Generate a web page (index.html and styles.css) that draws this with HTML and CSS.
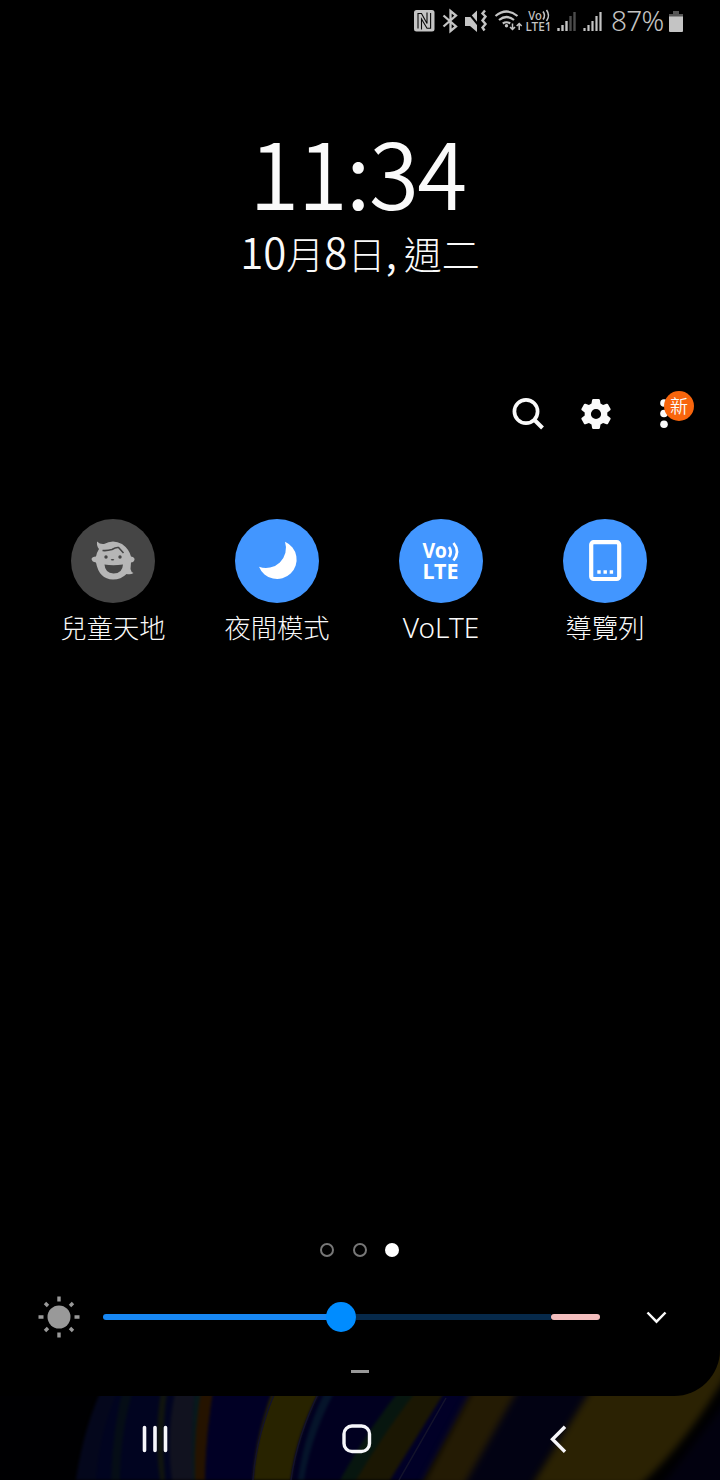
FILE: index.html
```html
<!DOCTYPE html>
<html lang="zh-Hant">
<head>
    <meta charset="UTF-8">
    <meta name="viewport" content="width=device-width, initial-scale=1.0">
    <title>快速設定</title>
    <link rel="stylesheet" href="styles.css">
</head>
<body>
    <div class="phone">
        <svg class="wallpaper" viewBox="0 0 720 140" preserveAspectRatio="none">
            <rect width="720" height="140" fill="#000002"/>
            <g class="soft">
                <path d="M106 40 Q84 85 76 140H335V40Z" fill="#010420"/>
                <path d="M106 40 Q84 85 76 140H96Q100 85 123 40Z" fill="#04071c"/>
                <path d="M125 40Q112 90 111 140H120Q120 90 136 40Z" fill="#050d16"/>
                <path d="M163 40Q153 90 160 140H165Q160 90 169 40Z" fill="#10140f"/>
                <path d="M178 40Q165 90 172 140H194Q190 90 196 40Z" fill="#11121f"/>
                <path d="M196 40Q190 90 193 140H203V40Z" fill="#07191c"/>
                <path d="M203 40Q193 90 195 140H205Q206 90 215 40Z" fill="#251300"/>
                <path d="M215 40Q206 90 205 140H256Q258 90 275 40Z" fill="#010025"/>
                <path d="M277 40Q256 90 253 140H291Q297 90 326 40Z" fill="#282300"/>
                <path d="M326 40Q297 90 291 140H350L415 40Z" fill="#010020"/>
                <path d="M331 40Q304 90 298 140H304Q312 90 341 40Z" fill="#05142a"/>
                <path d="M408 40Q370 85 340 140H366Q396 80 425 40Z" fill="#07160f"/>
                <path d="M425 40Q388 86 356 140H396L454 40Z" fill="#1b1703"/>
                <path d="M452 40L390 140H424L480 40Z" fill="#010027"/>
            </g>
            <g class="softer">
                <path d="M480 35L422 145H468L526 35Z" fill="#241b04"/>
                <path d="M526 35L464 145H530L600 35Z" fill="#020213"/>
                <path d="M600 35L532 145H640Q690 100 735 20V0H700Z" fill="#2b2203"/>
                <path d="M735 50L658 150H735Z" fill="#02010f"/>
            </g>
            <path d="M276 50Q256 96 253 140M320 50Q297 96 291 140M446 58L399 140" class="crease"/>
        </svg>

        <main class="panel">
            <header class="status">
                <svg width="144" height="30" viewBox="0 0 144 30">
                    <rect x="1" y="2" width="20.500" height="21.500" rx="2.500" fill="#c4c4c4"/>
                    <path d="M5 20.500V5.500H8.500L14 15.500V4.500M8.500 21.500V11L14 20.200H17.600V5" fill="none" stroke="#0a0a0a" stroke-width="1.100"/>
                    <path d="M30.500 7.500L43 18.500L37.500 23V3L43 7.500L30.500 18.500" fill="none" stroke="#c4c4c4" stroke-width="2.300"/>
                    <path d="M52 9h5l7-6.500V24l-7-6h-5z" fill="#c4c4c4"/>
                    <path d="M53 2L67 19" stroke="#000" stroke-width="2"/>
                    <path d="M72 2.500l-2.500 3 3 3-3 4 3 3.500-3 3.500 2 3" stroke="#c4c4c4" stroke-width="2.400" fill="none"/>
                    <path d="M82.500 8Q93.500-1 104.500 8M86 12Q93.500 6 101 12M89.800 15.500Q93.500 13 97.200 15.500" fill="none" stroke="#c4c4c4" stroke-width="2.200"/>
                    <circle cx="93.500" cy="17.800" r="1.700" fill="#c4c4c4"/>
                    <path d="M99.500 15.500V21M97 19l2.500 2.500L102 19M106.200 22V16M103.700 18l2.500-2.500 2.500 2.500" fill="none" stroke="#c4c4c4" stroke-width="1.500"/>
                    <text x="115.300" y="11.500" font-size="12.500" textLength="13.500" lengthAdjust="spacingAndGlyphs" class="volte-text">Vo</text>
                    <path d="M130 3.500q3 4 0 8M133.500 2q4 5.500 0 11" stroke="#c4c4c4" stroke-width="1.600" fill="none"/>
                    <text x="112.500" y="23" font-size="12.500" textLength="26" lengthAdjust="spacingAndGlyphs" class="volte-text">LTE1</text>
                </svg>
                <svg class="signal" width="20" height="22" viewBox="0 0 20 22">
                    <path d="M1.500 18V21M5.500 15V21M9.500 11V21" stroke="#c4c4c4" stroke-width="2.400"/>
                    <path d="M13.500 6V21M17.500 2V21" stroke="#4c4c4c" stroke-width="2.400"/>
                </svg>
                <svg class="signal second" width="20" height="22" viewBox="0 0 20 22">
                    <path d="M1.500 18V21M5.500 15V21M9.500 11V21M13.500 6V21M17.500 2V21" stroke="#c4c4c4" stroke-width="2.200"/>
                </svg>
                <span class="percent">87%</span>
                <svg class="battery" width="16" height="23" viewBox="0 0 16 23">
                    <path d="M5 0h6v3h4v3H1V3h4z" fill="#555"/>
                    <path d="M1 5.500h14V20q0 1-1 1H2q-1 0-1-1z" fill="#c4c4c4"/>
                </svg>
            </header>

            <div class="clock">11:34</div>
            <div class="date"><span class="num">10</span>月<span class="num">8</span>日<span class="num comma">,</span>週二</div>

            <div class="toolbar">
                <svg width="34" height="34" viewBox="0 0 34 34" fill="none" stroke="#fafafa">
                    <circle cx="15" cy="14.500" r="11.600" stroke-width="3.700"/>
                    <path d="M23 22.500L31.500 31" stroke-width="4"/>
                </svg>
                <svg width="30" height="32" viewBox="0 0 30 32">
                    <path fill="#fafafa" fill-rule="evenodd" d="M12.300 1h5.400q1 0 1.200 1l.6 3.600 2.600 1.500 3.400-1.300q1-.4 1.500.5l2.500 4.400q.5.900-.3 1.500l-2.900 2.300v3l2.900 2.300q.8.600.3 1.500L27 25.700q-.5.900-1.500.5l-3.400-1.300-2.600 1.500-.6 3.600q-.2 1-1.200 1h-5.400q-1 0-1.200-1l-.6-3.600-2.600-1.500-3.400 1.300q-1 .4-1.500-.5L.5 21.300q-.5-.9.3-1.500l2.900-2.300v-3L.800 12.200q-.8-.6-.3-1.500L3 6.300q.5-.9 1.500-.5l3.400 1.300 2.600-1.500.6-3.600q.2-1 1.200-1zM15 10.900a5.100 5.100 0 1 0 0 10.200 5.100 5.100 0 1 0 0-10.200z"/>
                </svg>
                <div class="more">
                    <svg width="8" height="30" viewBox="0 0 8 30" fill="#fafafa">
                        <circle cx="4" cy="4" r="3.800"/>
                        <circle cx="4" cy="14.500" r="3.800"/>
                        <circle cx="4" cy="25.200" r="3.800"/>
                    </svg>
                    <span class="badge">新</span>
                </div>
            </div>

            <section class="tiles">
                <div class="tile">
                    <div class="circle off">
                        <svg width="84" height="84" viewBox="0 0 84 84">
                            <path fill="#b6b6b6" d="M26 22.500Q29 25.500 33 25Q42 20 51 25Q58 30 60 37.500Q64 38 63.500 41Q62.500 43.500 60 43.500L59.500 50Q60 53 62.500 54Q60 56 55.500 55Q50 60.500 42 60.500Q28 60 25 43.500Q21 43 20.500 40Q21 37.500 25 37.500Q25.500 34 28 30Q25.500 27 26 22.500z"/>
                            <path d="M31.500 31.500Q36 32 41 30.500Q45 28 47.500 28.500L52.500 34" fill="none" stroke="#454545" stroke-width="1.500"/>
                            <circle cx="35" cy="38" r="1.700" fill="#454545"/>
                            <circle cx="49" cy="38" r="1.700" fill="#454545"/>
                            <ellipse cx="41.500" cy="40.800" rx="1.800" ry=".8" fill="#454545"/>
                            <path d="M33.500 45.500Q42 47 52 45.500Q51.500 54.500 42.500 54.500Q34 54 33.500 45.500z" fill="#454545"/>
                        </svg>
                    </div>
                    <span class="label">兒童天地</span>
                </div>
                <div class="tile">
                    <div class="circle">
                        <svg width="84" height="84" viewBox="0 0 84 84">
                            <path d="M50 22.700A19.500 19.500 0 1 1 24 47.700A20 20 0 0 0 50 22.700z" fill="#fff"/>
                        </svg>
                    </div>
                    <span class="label">夜間模式</span>
                </div>
                <div class="tile">
                    <div class="circle">
                        <svg width="84" height="84" viewBox="0 0 84 84">
                            <text x="23.500" y="38.500" textLength="24.500" lengthAdjust="spacingAndGlyphs" class="lte">Vo</text>
                            <path d="M50 28q3.500 5 0 10M54.500 24q7 8.500 0 17.500" fill="none" stroke="#fff" stroke-width="2.700"/>
                            <text x="23.500" y="59.500" textLength="36" lengthAdjust="spacingAndGlyphs" class="lte">LTE</text>
                        </svg>
                    </div>
                    <span class="label latin">VoLTE</span>
                </div>
                <div class="tile">
                    <div class="circle">
                        <svg width="84" height="84" viewBox="0 0 84 84">
                            <rect x="28.200" y="23.200" width="28" height="36.800" rx="2.500" fill="none" stroke="#fff" stroke-width="4.200"/>
                            <path d="M34.300 53h3.400M40.500 53h3.400M46.700 53h3.400" stroke="#fff" stroke-width="3.400"/>
                        </svg>
                    </div>
                    <span class="label">導覽列</span>
                </div>
            </section>

            <div class="pages">
                <i class="page"></i>
                <i class="page"></i>
                <i class="page current"></i>
            </div>

            <div class="brightness">
                <svg width="42" height="42" viewBox="-21 -21 42 42">
                    <circle r="11.500" fill="#999"/>
                    <g stroke="#999" stroke-width="3.400">
                        <path d="M0-20.500V-15.500M0 20.500V15.500M-20.500 0H-15.500M20.500 0H15.500"/>
                        <path d="M-14-14L-11-11M14-14L11-11M-14 14L-11 11M14 14L11 11"/>
                    </g>
                </svg>
                <div class="slider">
                    <div class="fill"></div>
                    <div class="knob"></div>
                    <div class="rest"></div>
                    <div class="limit"></div>
                </div>
                <svg width="22" height="14" viewBox="0 0 22 14">
                    <path d="M1.500 2.500l9 9.200 9-9.200" fill="none" stroke="#fafafa" stroke-width="2.500"/>
                </svg>
            </div>
            <div class="handle"></div>
        </main>

        <nav class="nav">
            <svg width="28" height="28" viewBox="0 0 28 28">
                <path d="M3.500 2.500V25.500M14 2.500V25.500M24.500 2.500V25.500" stroke="#f6f6fa" stroke-width="3.600" stroke-linecap="round"/>
            </svg>
            <svg width="30" height="30" viewBox="0 0 30 30">
                <rect x="2" y="2" width="25.500" height="25.500" rx="8" fill="none" stroke="#f6f6fa" stroke-width="3.400"/>
            </svg>
            <svg width="18" height="28" viewBox="0 0 18 28">
                <path d="M15 1.800L2.500 14.300L15 26.800" fill="none" stroke="#f6f6fa" stroke-width="3.400"/>
            </svg>
        </nav>
    </div>
</body>
</html>
```
FILE: styles.css
```css
body {
    margin: 0;
    background: #000;
    color: #fafafa;
    font-family: "Noto Sans CJK TC", "Noto Sans", sans-serif;
    font-weight: 300;
}
svg {
    display: block;
    flex: none;
}
.phone {
    position: relative;
    width: 720px;
    height: 1480px;
    overflow: hidden;
}
.wallpaper {
    position: absolute;
    left: 0;
    bottom: 0;
    width: 720px;
    height: 140px;
}
.soft {
    filter: blur(1.5px);
}
.softer {
    filter: blur(3.5px);
}
.crease {
    fill: none;
    stroke: #14132c;
    stroke-width: 1.5;
}
.panel {
    position: relative;
    display: flex;
    flex-direction: column;
    box-sizing: border-box;
    height: 1396px;
    background: #000;
    border-radius: 0 0 46px 0;
}

/* status bar */
.status {
    display: flex;
    align-items: flex-start;
    box-sizing: border-box;
    height: 44px;
    padding: 8px 0 0 413px;
    color: #c4c4c4;
}
.volte-text {
    font-family: "Noto Sans", sans-serif;
    font-weight: 500;
    fill: #c4c4c4;
}
.signal {
    margin-top: 2px;
}
.signal.second {
    margin-left: 6px;
}
.percent {
    width: 57px;
    margin-left: 8px;
    font-family: "Noto Sans", sans-serif;
    font-size: 28px;
    font-weight: 350;
    line-height: 25px;
    letter-spacing: -0.800px;
}
.battery {
    margin-top: 3px;
    margin-left: 0;
}

/* clock */
.clock {
    height: 118px;
    margin-top: 67px;
    padding-right: 5px;
    font-size: 91px;
    font-weight: 350;
    line-height: 118px;
    letter-spacing: -1.600px;
    text-align: center;
}
.date {
    height: 56px;
    margin-top: -6px;
    font-size: 38px;
    line-height: 56px;
    text-align: center;
    white-space: nowrap;
}
.num {
    font-size: 42px;
    font-weight: 350;
}
.comma {
    margin-right: 7px;
}

/* search, settings, more */
.toolbar {
    display: flex;
    align-items: center;
    height: 36px;
    margin-top: 117px;
    padding-left: 511px;
}
.toolbar > svg + svg {
    margin-left: 36px;
}
.more {
    position: relative;
    margin-left: 49px;
}
.badge {
    position: absolute;
    left: 4px;
    top: -8px;
    width: 30px;
    height: 30px;
    border-radius: 50%;
    background: #f8650c;
    font-size: 18px;
    font-weight: 350;
    line-height: 29px;
    text-align: center;
}

/* quick tiles */
.tiles {
    display: flex;
    margin-top: 87px;
    padding-left: 31px;
}
.tile {
    display: flex;
    flex-direction: column;
    align-items: center;
    width: 164px;
}
.circle {
    width: 84px;
    height: 84px;
    border-radius: 50%;
    background: #4296ff;
}
.circle.off {
    background: #454545;
}
.lte {
    font-family: "Noto Sans", sans-serif;
    font-size: 22px;
    font-weight: 700;
    fill: #fff;
}
.label {
    height: 40px;
    margin-top: 4px;
    font-size: 26.300px;
    line-height: 40px;
    white-space: nowrap;
}
.latin {
    font-family: "Noto Sans", sans-serif;
    font-size: 28px;
    font-weight: 350;
}

/* page dots */
.pages {
    display: flex;
    gap: 18.500px;
    margin-top: 596px;
    padding-left: 320px;
}
.page {
    box-sizing: border-box;
    width: 14px;
    height: 14px;
    border: 2px solid #777;
    border-radius: 50%;
}
.page.current {
    border: none;
    background: #fff;
}

/* brightness */
.brightness {
    display: flex;
    align-items: center;
    height: 42px;
    margin-top: 39px;
    padding-left: 38px;
}
.slider {
    display: flex;
    align-items: center;
    width: 497px;
    margin: 0 46px 0 23px;
}
.fill {
    width: 225px;
    height: 6px;
    border-radius: 3px 0 0 3px;
    background: #1787f3;
}
.knob {
    width: 30px;
    height: 30px;
    margin-left: -2px;
    border-radius: 50%;
    background: #008cff;
}
.rest {
    flex: 1;
    height: 6px;
    background: #06294a;
}
.limit {
    width: 49px;
    height: 6px;
    border-radius: 3px;
    background: #f3bdbd;
}
.handle {
    width: 18px;
    height: 3px;
    margin: 32px 0 0 351px;
    background: #999;
}

/* navigation bar */
.nav {
    position: relative;
    display: flex;
    align-items: center;
    box-sizing: border-box;
    height: 84px;
    padding: 2px 0 0 141px;
}
.nav svg:nth-child(2) {
    margin-left: 173px;
}
.nav svg:nth-child(3) {
    margin-left: 178px;
}
```
